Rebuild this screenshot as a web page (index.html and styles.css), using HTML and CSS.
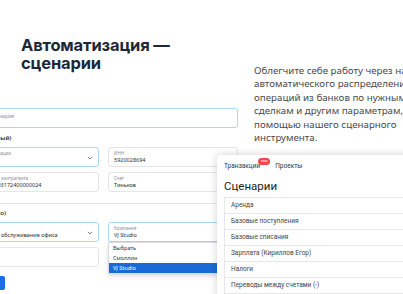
FILE: index.html
```html
<!DOCTYPE html>
<html lang="ru">
<head>
  <meta charset="UTF-8">
  <meta name="viewport" content="width=device-width, initial-scale=1.0">
  <title>Автоматизация — сценарии</title>
  <link rel="stylesheet" href="styles.css">
</head>
<body>

  <section class="promo">
    <!-- Левая колонка: заголовок + скрин формы -->
    <div class="promo-left">
      <h1 class="promo-title">Автоматизация —<br>сценарии</h1>

      <div class="mock-form">
        <div class="field focus">
          <span class="placeholder">Название сценария</span>
        </div>

        <div class="group-label">(обязательный)</div>
        <div class="row">
          <div class="field focus select">
            <span class="f-label">Категория операции</span>
            <span class="f-value">&nbsp;</span>
            <svg class="chevron" viewBox="0 0 7 4"><path d="M1 .7l2.5 2.4L6 .7"/></svg>
          </div>
          <div class="field">
            <span class="f-label">ИНН</span>
            <span class="f-value">5920028694</span>
          </div>
        </div>
        <div class="row">
          <div class="field">
            <span class="f-label">Расчётный счёт контрагента</span>
            <span class="f-value">407028100003172400000024</span>
          </div>
          <div class="field">
            <span class="f-label">Счет</span>
            <span class="f-value">Тиньков</span>
          </div>
        </div>

        <div class="divider"></div>

        <div class="group-label">(для любого)</div>
        <div class="row">
          <div class="field focus select">
            <span class="f-label">Статья</span>
            <span class="f-value">Техническое обслуживание офиса</span>
            <svg class="chevron" viewBox="0 0 7 4"><path d="M1 .7l2.5 2.4L6 .7"/></svg>
          </div>
          <div class="field focus">
            <span class="f-label">Компания</span>
            <span class="f-value">VJ Studio</span>
            <ul class="dropdown">
              <li>Выбрать</li>
              <li>Смоллин</li>
              <li class="active">VJ Studio</li>
            </ul>
          </div>
        </div>
        <div class="row">
          <div class="field"></div>
        </div>

        <button class="save-btn">Сохранить</button>
      </div>
    </div>

    <!-- Правая колонка: описание -->
    <p class="promo-text">Облегчите себе работу через настройку<br>автоматического распределения<br>операций из банков по нужным<br>сделкам и другим параметрам, с<br>помощью нашего сценарного<br>инструмента.</p>

    <!-- Окно со списком сценариев -->
    <div class="panel">
      <nav class="tabs">
        <span class="tab">Транзакции<span class="badge">new</span></span>
        <span class="tab">Проекты</span>
      </nav>
      <h2 class="panel-title">Сценарии</h2>
      <ul class="scenario-list">
        <li>Аренда</li>
        <li>Базовые поступления</li>
        <li>Базовые списания</li>
        <li>Зарплата (Кириллов Егор)</li>
        <li>Налоги</li>
        <li>Переводы между счетами (-)</li>
        <li>Прочие расходы</li>
      </ul>
    </div>
  </section>

</body>
</html>
```

FILE: styles.css
```css
/* Reset */
* { box-sizing: border-box; margin: 0; padding: 0; }
body {
  width: 403px;
  height: 294px;
  overflow: hidden;
  background: #fff;
  font-family: "Noto Sans", "Open Sans", sans-serif;
  color: #333;
}
/* Блок промо */
.promo {
  position: relative;
  display: grid;
  grid-template-columns: 254px 1fr;
  height: 294px;
}
.promo-left {
  padding-top: 36px;
}
.promo-title {
  margin-left: 21px;
  font-family: Inter, "Noto Sans", sans-serif;
  font-weight: 700;
  font-size: 16.5px;
  line-height: 18px;
  letter-spacing: -0.15px;
  color: #1c2838;
}
.promo-text {
  padding-top: 64px;
  font-size: 9.75px;
  line-height: 13.4px;
  color: #4a4a4a;
  white-space: nowrap;
}
/* Скрин формы */
.mock-form {
  margin: 36px 0 0 -40px;
  width: 278px;
  font-size: 5.5px;
}
.field {
  position: relative;
  display: flex;
  flex-direction: column;
  justify-content: center;
  height: 20px;
  padding: 0 5px;
  border: 1px solid #e3e5e8;
  border-radius: 3px;
  background: #fff;
}
.field.focus {
  border-color: #a9d8f1;
}
.placeholder {
  margin-top: -5px;
  font-size: 5px;
  color: #8a8f96;
}
.f-label {
  font-size: 4.5px;
  line-height: 6px;
  color: #8a8f96;
}
.f-value {
  font-size: 5.5px;
  line-height: 8px;
  color: #2b2f33;
}
.chevron {
  position: absolute;
  right: 5px;
  top: 8px;
  width: 6px;
  height: 4px;
  fill: none;
  stroke: #444;
  stroke-width: .8;
}
.group-label {
  margin: 6px 0 5px 4px;
  font-size: 6px;
  line-height: 8px;
  font-weight: 600;
  color: #2b2f33;
}
.divider + .group-label {
  margin-top: 5px;
  margin-left: 7px;
}
.row {
  display: grid;
  grid-template-columns: 139px 130px;
  gap: 9px;
  margin-bottom: 5px;
}
.divider {
  height: 1px;
  margin-top: 11px;
  background: #e6e7e9;
}
/* Выпадающий список */
.dropdown {
  position: absolute;
  left: -1px;
  right: -1px;
  top: 19px;
  list-style: none;
  background: #fff;
  border: 1px solid #d9dce0;
  box-shadow: 0 2px 4px rgba(0,0,0,0.15);
  z-index: 1;
}
.dropdown li {
  height: 10px;
  padding-left: 4px;
  font-size: 5.5px;
  line-height: 10px;
  color: #333;
}
.dropdown li.active {
  background: #1a6ad6;
  color: #fff;
}
.save-btn {
  display: block;
  width: 45px;
  height: 14px;
  margin-top: 9px;
  border: none;
  border-radius: 2px;
  background: #1b6fe4;
  color: #fff;
  font-family: inherit;
  font-size: 5px;
}
/* Окно сценариев */
.panel {
  position: absolute;
  left: 217px;
  top: 155px;
  width: 200px;
  height: 150px;
  padding: 7px 0 0 7px;
  background: #fff;
  border-radius: 4px 0 0 0;
  box-shadow: 0 0 9px rgba(0,0,0,0.18);
  font-family: Roboto, "Noto Sans", sans-serif;
  z-index: 2;
}
.tabs {
  display: flex;
  gap: 15px;
  font-size: 6.5px;
  line-height: 8px;
  color: #333;
}
.tab {
  position: relative;
}
.badge {
  position: absolute;
  right: -10px;
  top: -4px;
  width: 12px;
  height: 7px;
  border-radius: 4px;
  background: #ec4a4a;
  color: #fff;
  font-size: 3.5px;
  line-height: 7px;
  text-align: center;
}
.panel-title {
  margin-top: 8px;
  font-size: 11.5px;
  line-height: 16px;
  font-weight: 400;
  color: #222;
}
.scenario-list {
  margin-top: 3px;
  list-style: none;
  border: 1px solid #e6e7ea;
  border-bottom: none;
}
.scenario-list li {
  height: 16px;
  padding-left: 6px;
  border-bottom: 1px solid #e6e7ea;
  font-size: 6.5px;
  line-height: 15px;
  color: #444;
}
```
